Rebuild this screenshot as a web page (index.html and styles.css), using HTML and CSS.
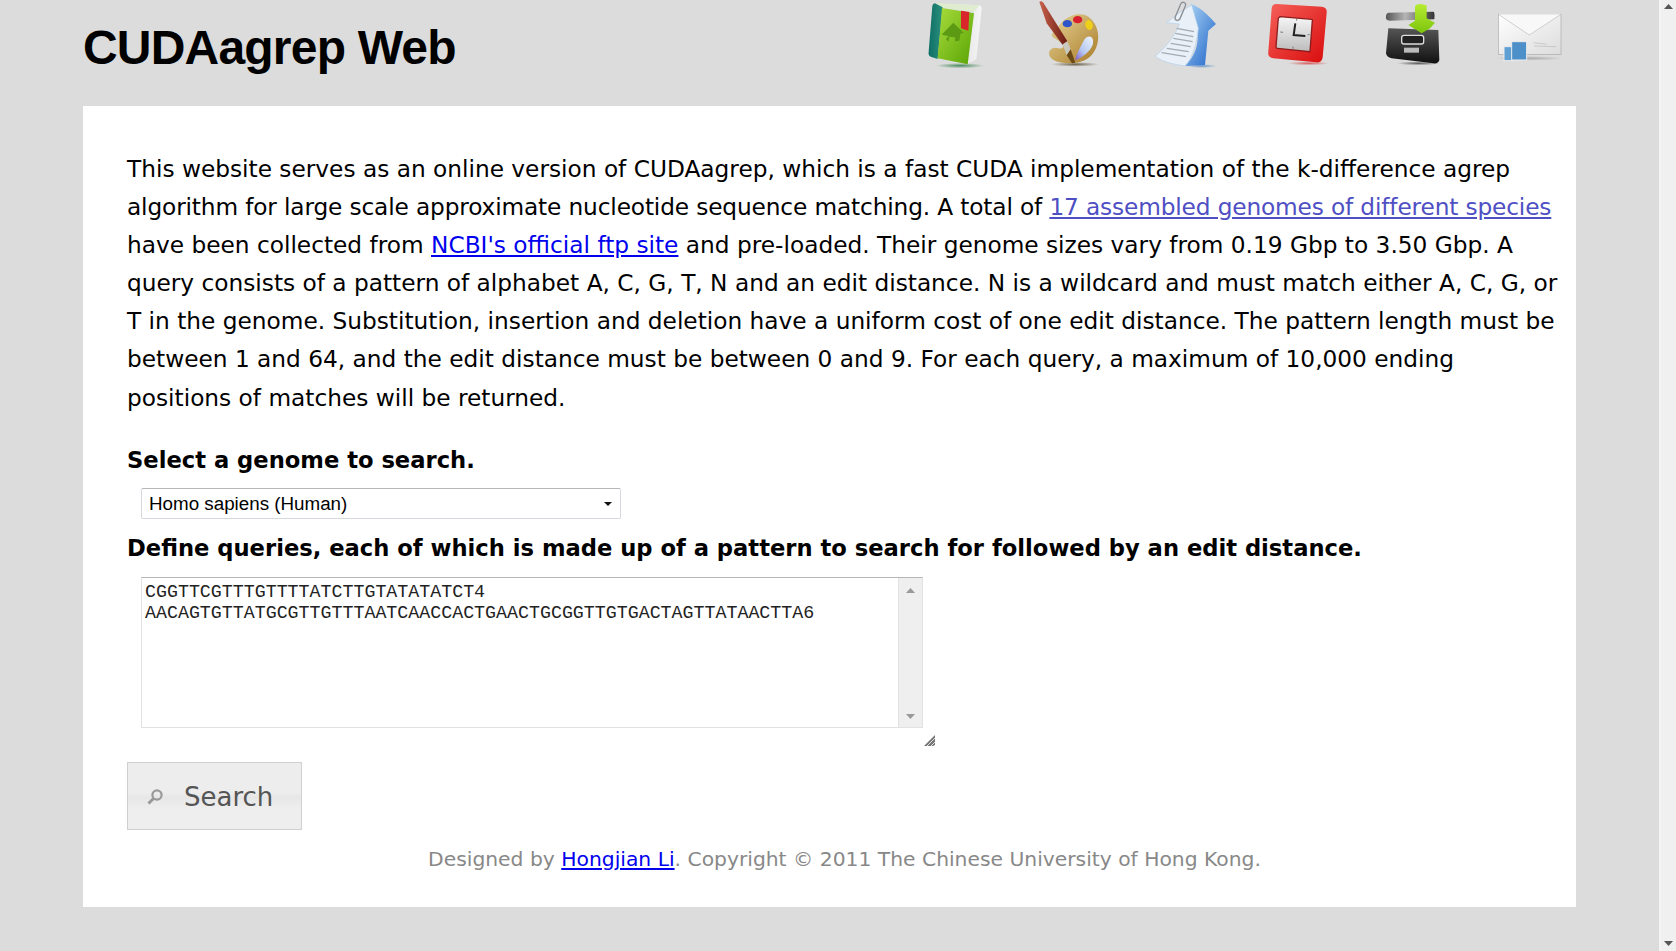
FILE: index.html
```html
<!DOCTYPE html>
<html lang="en">
<head>
<meta charset="utf-8">
<title>CUDAagrep Web</title>
<link rel="stylesheet" href="styles.css">
</head>
<body>
<div class="viewport">
  <div class="page">
    <header class="header">
      <h1 class="title">CUDAagrep Web</h1>
      <nav class="icons">
        <a class="icon" href="#" aria-label="Home">
          <svg viewBox="72 0 210 210" width="70" height="70">
            <defs>
              <linearGradient id="bk" x1="0" y1="0" x2="1" y2="1"><stop offset="0" stop-color="#a8dc3c"/><stop offset="1" stop-color="#58a404"/></linearGradient>
              <linearGradient id="sp" x1="0" y1="0" x2="1" y2="0"><stop offset="0" stop-color="#0f6f66"/><stop offset="1" stop-color="#2a8f7c"/></linearGradient>
              <linearGradient id="pg" x1="0" y1="0" x2="1" y2="0"><stop offset="0" stop-color="#c4c8c4"/><stop offset="1" stop-color="#f6f6f6"/></linearGradient>
              <radialGradient id="sh"><stop offset="0" stop-color="#2f7f48" stop-opacity=".85"/><stop offset="1" stop-color="#2f7f48" stop-opacity="0"/></radialGradient>
            </defs>
            <ellipse cx="180" cy="197" rx="72" ry="8" fill="url(#sh)"/>
            <path d="M108 8 L238 16 Q246 18 245 26 L229 178 L203 192 L222 30 Z" fill="url(#pg)"/>
            <path d="M108 8 L238 16 L222 36 L126 24 Z" fill="#dfeccf"/>
            <path d="M105 10 L128 22 L113 177 L92 170 Q84 166 86 155 L97 18 Q98 10 105 10 Z" fill="url(#sp)"/>
            <path d="M126 24 L222 40 L203 193 L113 175 Z" fill="url(#bk)"/>
            <path d="M183 32 L208 36 L205 92 L183 85 Z" fill="#d9262a"/>
            <path d="M160 68 L192 100 L182 100 L178 122 L165 124 L165 112 L148 110 L145 125 L138 118 L146 108 L125 104 Z" fill="#5c9a14"/>
          </svg>
        </a>
        <a class="icon" href="#" aria-label="Palette">
          <svg viewBox="414 0 210 210" width="70" height="70">
            <defs>
              <linearGradient id="pl" x1="0" y1="0" x2="1" y2="1"><stop offset="0" stop-color="#e8d498"/><stop offset="1" stop-color="#a87c28"/></linearGradient>
              <linearGradient id="br" x1="0" y1="0" x2="1" y2="0"><stop offset="0" stop-color="#c8604a"/><stop offset="1" stop-color="#6a1c12"/></linearGradient>
              <linearGradient id="wb" x1="1" y1="0" x2="0" y2="1"><stop offset="0" stop-color="#eef6ff"/><stop offset=".6" stop-color="#b6c8f0"/><stop offset="1" stop-color="#7f58c8"/></linearGradient>
              <radialGradient id="sh2"><stop offset="0" stop-color="#4a3d1e" stop-opacity=".75"/><stop offset="1" stop-color="#4a3d1e" stop-opacity="0"/></radialGradient>
            </defs>
            <ellipse cx="525" cy="193" rx="72" ry="7" fill="url(#sh2)"/>
            <path d="M470 90 C485 55 530 30 565 50 C600 75 605 130 575 165 C550 195 490 195 460 180 C440 165 445 145 465 143 C480 145 490 150 490 135 C480 120 455 115 455 105 C458 95 465 95 470 90 Z" fill="url(#pl)"/>
            <ellipse cx="502" cy="71" rx="14" ry="11" fill="#2f53c8"/>
            <ellipse cx="533" cy="59" rx="14" ry="11" fill="#d81f30"/>
            <ellipse cx="567" cy="75" rx="11" ry="15" fill="#eed018" transform="rotate(-15 567 75)"/>
            <path d="M552 120 C565 100 585 110 578 135 C570 155 545 175 525 180 C530 160 545 135 552 120 Z" fill="url(#wb)"/>
            <path d="M418 6 Q424 0 430 8 L502 124 L488 135 L440 70 Z" fill="url(#br)"/>
            <path d="M488 133 L502 124 L512 148 L500 166 Z" fill="#c9c9c0"/>
            <path d="M500 166 L512 148 L526 188 L516 190 Z" fill="#6b4a18"/>
          </svg>
        </a>
        <a class="icon" href="#" aria-label="Document">
          <svg viewBox="756 0 210 210" width="70" height="70">
            <defs>
              <linearGradient id="ar" x1="0" y1="0" x2="1" y2="1"><stop offset="0" stop-color="#b0d8f6"/><stop offset="1" stop-color="#1c62c8"/></linearGradient>
              <radialGradient id="sh3"><stop offset="0" stop-color="#4a86c8" stop-opacity=".8"/><stop offset="1" stop-color="#4a86c8" stop-opacity="0"/></radialGradient>
            </defs>
            <ellipse cx="905" cy="198" rx="45" ry="6" fill="url(#sh3)"/>
            <path d="M872 12 C900 20 930 50 948 72 L925 92 L915 195 L855 198 C885 170 900 130 890 85 Z" fill="url(#ar)"/>
            <path d="M835 40 L800 68 L838 72 C825 110 790 150 765 168 C790 190 840 195 855 198 C880 170 890 130 895 85 L875 15 Z" fill="#e9f0f7" stroke="#b0d0ee" stroke-width="2"/>
            <g stroke="#a3abb3" stroke-width="4">
              <path d="M830 85 L882 95"/><path d="M826 100 L880 110"/><path d="M820 115 L878 125"/><path d="M812 130 L872 140"/><path d="M800 145 L866 155"/><path d="M785 158 L858 170"/>
            </g>
            <path d="M838 60 L856 18 C860 8 848 2 842 12 L826 50 C822 60 834 66 840 56 L852 28" fill="none" stroke="#8b9097" stroke-width="4"/>
          </svg>
        </a>
        <a class="icon" href="#" aria-label="Clock">
          <svg viewBox="198 0 210 210" width="70" height="70">
            <defs>
              <linearGradient id="rd" x1="0" y1="0" x2="1" y2="1"><stop offset="0" stop-color="#f6605a"/><stop offset="1" stop-color="#d80c0c"/></linearGradient>
              <linearGradient id="fc" x1="0" y1="0" x2="0" y2="1"><stop offset="0" stop-color="#f6f6f6"/><stop offset="1" stop-color="#bcbcbc"/></linearGradient>
              <radialGradient id="sh4"><stop offset="0" stop-color="#d84040" stop-opacity=".8"/><stop offset="1" stop-color="#d84040" stop-opacity="0"/></radialGradient>
            </defs>
            <ellipse cx="325" cy="190" rx="62" ry="6" fill="url(#sh4)"/>
            <path d="M230 12 L365 20 Q382 22 380 38 L368 172 Q366 190 348 187 L220 175 Q202 172 205 155 L215 25 Q216 12 230 12 Z" fill="url(#rd)"/>
            <path d="M240 50 L335 58 Q338 58 337 62 L330 155 L232 145 Q228 145 228 140 L235 54 Z" fill="url(#fc)" stroke="#8e1c1c" stroke-width="4"/>
            <path d="M286 70 L281 105 L316 108" fill="none" stroke="#222" stroke-width="6"/>
            <path d="M241 96 L249 97 M329 104 L323 104 M279 140 L279 146 M290 56 L290 62" stroke="#777" stroke-width="3"/>
          </svg>
        </a>
        <a class="icon" href="#" aria-label="Download">
          <svg viewBox="540 0 210 210" width="70" height="70">
            <defs>
              <linearGradient id="bx" x1="0" y1="0" x2="0" y2="1"><stop offset="0" stop-color="#555"/><stop offset="1" stop-color="#111"/></linearGradient>
              <linearGradient id="ld" x1="0" y1="0" x2="1" y2="0"><stop offset="0" stop-color="#555"/><stop offset=".4" stop-color="#b4b4b4"/><stop offset="1" stop-color="#333"/></linearGradient>
              <linearGradient id="gn" x1="0" y1="0" x2="0" y2="1"><stop offset="0" stop-color="#b6ec32"/><stop offset="1" stop-color="#7cc40c"/></linearGradient>
              <radialGradient id="sh5"><stop offset="0" stop-color="#222" stop-opacity=".7"/><stop offset="1" stop-color="#222" stop-opacity="0"/></radialGradient>
            </defs>
            <ellipse cx="655" cy="190" rx="65" ry="6" fill="url(#sh5)"/>
            <path d="M565 38 L700 35 Q705 35 703 58 L570 62 Q555 60 558 50 Q558 40 565 38 Z" fill="url(#ld)"/>
            <path d="M565 85 L715 90 L718 180 Q715 192 700 190 L575 175 Q560 172 558 160 Z" fill="url(#bx)"/>
            <rect x="605" y="106" width="66" height="26" rx="7" fill="#222" stroke="#ddd" stroke-width="4"/>
            <rect x="612" y="143" width="45" height="15" fill="#bbb"/>
            <path d="M645 20 Q648 12 660 12 L675 14 Q682 16 680 25 L680 55 L705 68 L690 85 L665 100 L625 75 L645 62 Z" fill="url(#gn)"/>
          </svg>
        </a>
        <a class="icon" href="#" aria-label="Mail">
          <svg viewBox="882 0 210 210" width="70" height="70">
            <defs>
              <linearGradient id="en" x1="0" y1="0" x2="1" y2="1"><stop offset="0" stop-color="#fff"/><stop offset="1" stop-color="#dcdcdc"/></linearGradient>
              <radialGradient id="sh6"><stop offset="0" stop-color="#aaa"/><stop offset="1" stop-color="#aaa" stop-opacity="0"/></radialGradient>
            </defs>
            <ellipse cx="988" cy="175" rx="102" ry="7" fill="url(#sh6)"/>
            <rect x="895" y="43" width="188" height="120" fill="url(#en)" stroke="#aaa" stroke-width="2"/>
            <path d="M895 43 L988 105 L1083 43" fill="#f8f8f8" stroke="#bbb" stroke-width="2"/>
            <path d="M1000 128 L1040 133 M1002 138 L1068 140" stroke="#bbb" stroke-width="2"/>
            <rect x="912" y="140" width="30" height="42" fill="#5e9fd4" stroke="#eee" stroke-width="3"/>
            <rect x="935" y="125" width="45" height="55" fill="#4d8fc8" stroke="#eee" stroke-width="3"/>
          </svg>
        </a>
      </nav>
    </header>

    <main class="panel">
      <p class="intro">This website serves as an online version of CUDAagrep, which is a fast CUDA implementation of the k-difference agrep<br>
      <span class="tight">algorithm for large scale approximate nucleotide sequence matching. A total of <a class="visited" href="#">17 assembled genomes of different species</a></span><br>
      have been collected from <a href="#">NCBI's official ftp site</a> and pre-loaded. Their genome sizes vary from 0.19 Gbp to 3.50 Gbp. A<br>
      query consists of a pattern of alphabet A, C, G, T, N and an edit distance. N is a wildcard and must match either A, C, G, or<br>
      T in the genome. Substitution, insertion and deletion have a uniform cost of one edit distance. The pattern length must be<br>
      between 1 and 64, and the edit distance must be between 0 and 9. For each query, a maximum of 10,000 ending<br>
      positions of matches will be returned.</p>

      <h2 class="label first">Select a genome to search.</h2>
      <div class="select-wrap">
        <select class="select"><option>Homo sapiens (Human)</option></select>
        <svg class="select-arrow" viewBox="0 0 8 4" width="8" height="4"><path d="M0 0H8L4 4Z" fill="#111"/></svg>
      </div>

      <h2 class="label second">Define queries, each of which is made up of a pattern to search for followed by an edit distance.</h2>
      <div class="area-row">
        <div class="area">
          <textarea class="queries" spellcheck="false">CGGTTCGTTTGTTTTATCTTGTATATATCT4
AACAGTGTTATGCGTTGTTTAATCAACCACTGAACTGCGGTTGTGACTAGTTATAACTTA6</textarea>
          <div class="area-bar">
            <svg viewBox="0 0 9 5" width="9" height="5"><path d="M0 5H9L4.5 0Z" fill="#999"/></svg>
            <svg viewBox="0 0 9 5" width="9" height="5"><path d="M0 0H9L4.5 5Z" fill="#999"/></svg>
          </div>
        </div>
        <svg class="grip" viewBox="0 0 12 12" width="12" height="12"><path d="M0 12 L11 1 L11 11 L9 12 Z" fill="#777"/><path d="M3 12 L12 3 M7 12 L12 7" stroke="#fff" stroke-width=".8"/></svg>
      </div>

      <button class="search" type="button">
        <svg viewBox="0 0 16 16" width="16" height="16"><circle cx="10" cy="6" r="4.6" fill="none" stroke="#999" stroke-width="2.2"/><path d="M6.5 9.5 L1.5 14.5" stroke="#999" stroke-width="3"/></svg>
        <span>Search</span>
      </button>

      <footer class="footer">Designed by <a href="#">Hongjian Li</a>. Copyright © 2011 The Chinese University of Hong Kong.</footer>
    </main>
  </div>

  <aside class="pagebar">
    <svg viewBox="0 0 9 5" width="9" height="5"><path d="M0 5H9L4.5 0Z" fill="#555"/></svg>
    <svg viewBox="0 0 9 5" width="9" height="5"><path d="M0 0H9L4.5 5Z" fill="#555"/></svg>
  </aside>
</div>
</body>
</html>
```
FILE: styles.css
```css
* { box-sizing: border-box; }
html, body { margin: 0; height: 100%; overflow: hidden; }
body { background: #dcdcdc; font-family: "DejaVu Sans", Verdana, sans-serif; color: #000; }
.viewport { display: flex; width: 1676px; height: 951px; }
.page { width: 1659px; padding: 0 0 0 83px; }
.header { display: flex; justify-content: space-between; height: 106px; width: 1493px; }
.title { margin: 20px 0 0; font: bold 48px/1.15 "Liberation Sans", Arial, sans-serif; letter-spacing: -0.8px; }
.icons { display: flex; gap: 44px; padding-right: 12px; align-items: flex-start; }
.icon { display: block; height: 70px; }
.icon svg { display: block; }
.panel { width: 1493px; height: 801px; background: #fff; padding: 44px 14px 0 44px; }
.intro { margin: 0; font-size: 23.25px; line-height: 38.1px; white-space: nowrap; }
.tight { letter-spacing: -0.14px; }
a { color: #0000ee; }
a.visited { color: #4f4fc4; }
.label { margin: 0; font-size: 22.65px; font-weight: bold; line-height: 30px; }
.label.first { margin-top: 28px; }
.label.second { margin-top: 14px; }
.select-wrap { position: relative; width: 480px; height: 31px; margin: 13px 0 0 14px; }
.select { appearance: none; -webkit-appearance: none; display: block; width: 100%; height: 100%; padding: 0 0 0 7px; border: 1px solid #d5d8dc; border-top-color: #b4b6ba; border-radius: 2px; background: #fff; font: 18.8px "Liberation Sans", Arial, sans-serif; color: #000; }
.select-arrow { position: absolute; right: 9px; top: 14px; }
.area-row { position: relative; width: 796px; margin: 14px 0 0 14px; height: 176px; }
.area { display: flex; width: 782px; height: 151px; border: 1px solid #e2e2e2; border-top-color: #b4b6ba; }
.queries { flex: 1; display: block; border: 0; outline: 0; resize: none; overflow: hidden; padding: 4px 3px 3px; font: 18.3px/21px "Liberation Mono", "Courier New", monospace; color: #222; white-space: pre; }
.area-bar { width: 24px; background: #efefef; border-left: 1px solid #e2e2e2; display: flex; flex-direction: column; justify-content: space-between; align-items: center; padding: 10px 0 8px; }
.area-bar svg { display: block; }
.grip { position: absolute; right: 1px; top: 157px; }
.search { display: flex; align-items: center; width: 175px; height: 68px; margin-top: 9px; padding: 2px 0 0 19px; border: 1px solid #cfcfcf; background: linear-gradient(#ededed 0 45%, #e7e7e7 52%, #eeeeee 70%); font-family: inherit; font-size: 26px; color: #555; gap: 21px; }
.search svg { display: block; }
.footer { margin-top: 14px; text-align: center; font-size: 20.3px; line-height: 30px; color: #888; }
.pagebar { width: 17px; border-left: 2px solid #f4f4f4; background: #f0f0f0; display: flex; flex-direction: column; justify-content: space-between; align-items: center; padding: 4px 0 5px; }
.pagebar svg { display: block; }
```
